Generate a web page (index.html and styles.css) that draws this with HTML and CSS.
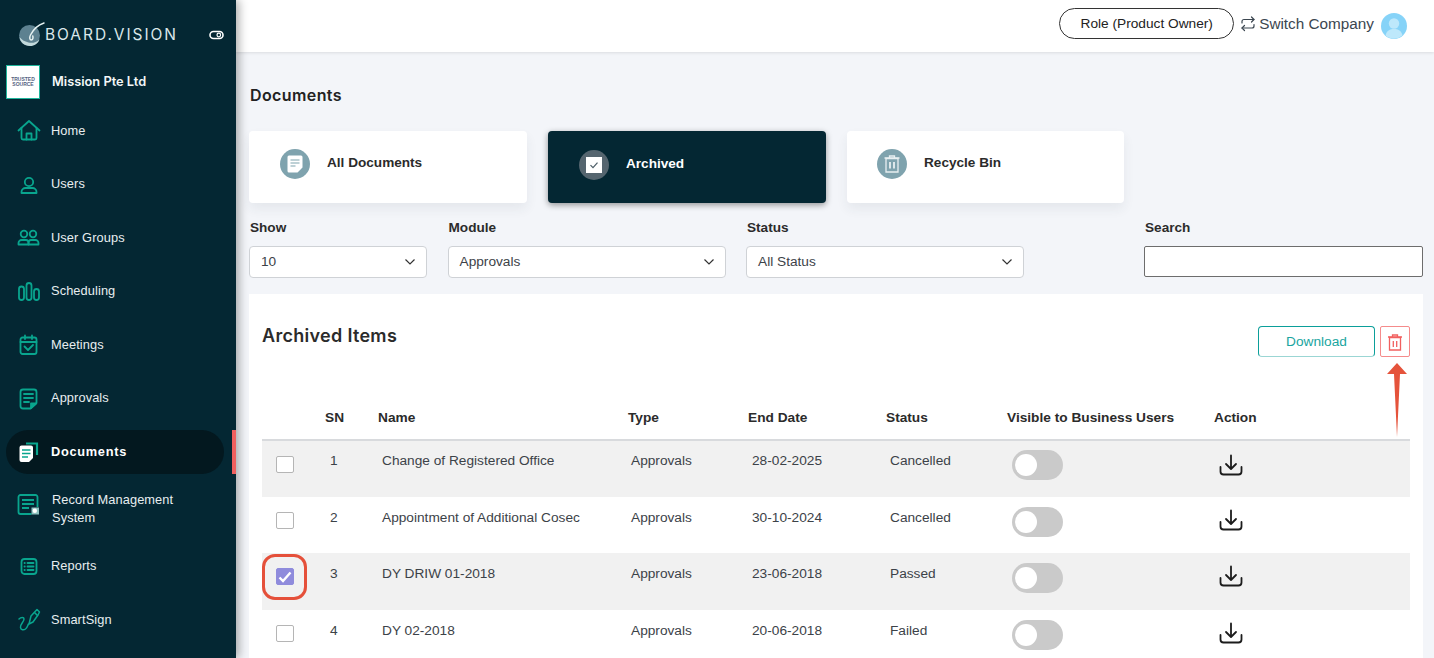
FILE: index.html
```html
<!DOCTYPE html>
<html lang="en">
<head>
<meta charset="utf-8">
<title>Documents - Board.Vision</title>
<link rel="stylesheet" href="styles.css">
</head>
<body>
<div class="app">
<aside class="sidebar">
  <div class="brand">
    <svg class="brand-mark" width="28" height="28" viewBox="0 0 28 28" fill="none">
      <circle cx="12.500" cy="14.500" r="10.500" fill="#5d8190"/>
      <path d="M2.500 16c.5 5 5 9 10.500 9 4.500 0 8-2.500 9.500-6.500-3 2.800-7 4-11 3-4-1-7-2.800-9-5.500z" fill="#c3dadc"/>
      <path d="M27 2C21 4 16 9 13.500 14c-1.200 2.500-1 5 .8 5 1.500 0 2-2 1.500-4" stroke="#e6f2f2" stroke-width="1.500" stroke-linecap="round"/>
    </svg>
    <span class="brand-name">BOARD.VISION</span>
    <svg class="brand-toggle" width="15" height="10" viewBox="0 0 15 10" fill="none">
      <rect x="1" y="1.500" width="13" height="7" rx="3.500" stroke="#fff" stroke-width="1.600"/>
      <circle cx="9.800" cy="5" r="1.800" stroke="#fff" stroke-width="1.200"/>
    </svg>
  </div>
  <div class="company">
    <div class="company-logo"><span>TRUSTED<br>SOURCE</span></div>
    <span class="company-name">Mission Pte Ltd</span>
  </div>
  <nav class="nav">
    <a class="nav-item">
      <svg class="nav-icon" viewBox="0 0 24 24" fill="none" stroke="#09a58e" stroke-width="1.800" stroke-linejoin="round" stroke-linecap="round"><path d="M1.500 12.500 12 3l10.500 9.500"/><path d="M4.500 10v10a1.500 1.500 0 0 0 1.500 1.500h12a1.500 1.500 0 0 0 1.500-1.500V10"/><path d="M9.500 21.500V15.500h5v6"/></svg>
      <span>Home</span>
    </a>
    <a class="nav-item">
      <svg class="nav-icon" viewBox="0 0 24 24" fill="none" stroke="#09a58e" stroke-width="1.800" stroke-linejoin="round"><circle cx="12" cy="10" r="4.200"/><path d="M4.500 21v-1c0-2.500 2-4 4-4h7c2 0 4 1.500 4 4v1z"/></svg>
      <span>Users</span>
    </a>
    <a class="nav-item">
      <svg class="nav-icon" viewBox="0 0 24 24" fill="none" stroke="#09a58e" stroke-width="1.800" stroke-linejoin="round"><circle cx="7" cy="9" r="3.300"/><circle cx="16" cy="9" r="3.300"/><path d="M1.500 19.500V18c0-1.500 1.500-3 3-3h4.500c1.500 0 2.500 1.500 2.500 3v1.500z"/><path d="M11.500 19.500V18c0-1.500 1-3 2.500-3h4.500c1.500 0 3 1.500 3 3v1.500z"/></svg>
      <span>User Groups</span>
    </a>
    <a class="nav-item">
      <svg class="nav-icon" viewBox="0 0 24 24" fill="none" stroke="#09a58e" stroke-width="1.800"><rect x="2" y="7.500" width="5" height="13.500" rx="2.500"/><rect x="9.500" y="4" width="5" height="17" rx="2.500"/><rect x="17" y="10" width="5" height="11" rx="2.500"/></svg>
      <span>Scheduling</span>
    </a>
    <a class="nav-item">
      <svg class="nav-icon" viewBox="0 0 24 24" fill="none" stroke="#09a58e" stroke-width="1.800" stroke-linecap="round" stroke-linejoin="round"><rect x="3.500" y="5.500" width="16" height="16.500" rx="2"/><path d="M3.500 10h16M8 3.500V7M15 3.500V7"/><path d="m7.500 14.500 3.500 3.500 5-5"/></svg>
      <span>Meetings</span>
    </a>
    <a class="nav-item">
      <svg class="nav-icon" viewBox="0 0 24 24" fill="none" stroke="#09a58e" stroke-width="1.800" stroke-linejoin="round" stroke-linecap="round"><path d="M13.500 22.500H6a2.500 2.500 0 0 1-2.500-2.500V6A2.500 2.500 0 0 1 6 3.500h11A2.500 2.500 0 0 1 19.500 6v11z"/><path d="M7 8h9M7 12h9M7 16h5"/><path d="M19 17.500h-5v4.500z" fill="#09a58e"/></svg>
      <span>Approvals</span>
    </a>
    <a class="nav-item nav-active">
      <svg class="nav-icon" viewBox="0 0 24 24" fill="none"><path d="M9 3.500h11V15" stroke="#09a58e" stroke-width="2.200"/><path d="M4.500 5.500H14a2 2 0 0 1 2 2v10.500l-4 4H4.500a2 2 0 0 1-2-2v-12.500a2 2 0 0 1 2-2z" fill="#fff"/><path d="M5 10h8.500M5 13.500h8.500M5 17h6" stroke="#09a58e" stroke-width="1.600"/></svg>
      <span>Documents</span>
    </a>
    <a class="nav-item nav-tall">
      <svg class="nav-icon nav-icon-up" viewBox="0 0 24 24" fill="none" stroke="#09a58e" stroke-width="1.800"><path d="M20.500 15V5a2 2 0 0 0-2-2H3.500a2 2 0 0 0-2 2v15a2 2 0 0 0 2 2h11"/><path d="M5 8h12M5 12h12M5 16h7"/><rect x="14.500" y="15.500" width="7.500" height="7" fill="#8cc2c0" stroke="none"/><circle cx="17.800" cy="18.800" r="2.200" fill="#fff" stroke="none"/></svg>
      <span class="nav-two">Record Management System</span>
    </a>
    <a class="nav-item">
      <svg class="nav-icon" viewBox="0 0 24 24" fill="none" stroke="#09a58e" stroke-width="1.800" stroke-linecap="round"><rect x="4.500" y="5" width="15" height="15" rx="3"/><path d="M10.500 9h6M10.500 12.500h6M10.500 16h6M7.500 9h.3M7.500 12.500h.3M7.500 16h.3"/></svg>
      <span>Reports</span>
    </a>
    <a class="nav-item">
      <svg class="nav-icon" viewBox="0 0 24 24" fill="none" stroke="#09a58e" stroke-width="1.500" stroke-linecap="round" stroke-linejoin="round"><path d="M14 9 20 2.500l2.500 2.500-1.500 3-5 7-4 2z"/><path d="m17.500 5.500 3 3"/><path d="M2 12c2-2 5-2 5 0 0 3-4 5-3.500 8.500.3 2.500 3 3 5 1.500s2-3.500 3-5"/></svg>
      <span>SmartSign</span>
    </a>
  </nav>
</aside>
<main class="main">
  <header class="topbar">
    <button class="role-pill">Role (Product Owner)</button>
    <svg class="switch-icon" width="16" height="16" viewBox="0 0 16 16" fill="none" stroke="#3b4650" stroke-width="1.200" stroke-linecap="round" stroke-linejoin="round"><path d="M2 7V5.500C2 4.400 2.800 3.500 4 3.500h10"/><path d="m11.500 1 2.500 2.500L11.500 6"/><path d="M14 8.500V10c0 1.100-.8 2-2 2H2"/><path d="M4.500 9.500 2 12l2.500 2.500"/></svg>
    <span class="switch-text">Switch Company</span>
    <svg class="avatar" width="26" height="26" viewBox="0 0 26 26"><circle cx="13" cy="13" r="13" fill="#86d3f8"/><circle cx="13" cy="10.500" r="5.200" fill="#bde8fb"/><path d="M4.500 22.500c1-5 4.500-6.500 8.500-6.500s7.500 1.500 8.500 6.500a13 13 0 0 1-17 0z" fill="#bde8fb"/></svg>
  </header>
  <div class="content">
    <h1 class="page-title">Documents</h1>
    <div class="cards">
      <div class="card">
        <span class="card-icon">
          <svg width="16" height="18" viewBox="0 0 16 18"><path d="M2 .500h12a1.500 1.500 0 0 1 1.500 1.500v10.500L10.500 17.500H2A1.500 1.500 0 0 1 .5 16V2A1.500 1.500 0 0 1 2 .500z" fill="#fff"/><path d="M3.500 5h9M3.500 8h9M3.500 11h5" stroke="#7fa3ae" stroke-width="1.200"/></svg>
        </span>
        <span class="card-label">All Documents</span>
      </div>
      <div class="card card-active">
        <span class="card-icon card-icon-dark">
          <svg width="16" height="16" viewBox="0 0 16 16"><rect width="16" height="16" fill="#fff"/><path d="m4.500 8.200 2.500 2.500 4.500-5" fill="none" stroke="#4b5c66" stroke-width="1.200"/></svg>
        </span>
        <span class="card-label">Archived</span>
      </div>
      <div class="card card-last">
        <span class="card-icon">
          <svg width="16" height="18" viewBox="0 0 16 18" fill="none" stroke="#e8eff1" stroke-width="1.300"><path d="M.5 3h15M5.500 3V1h5v2"/><path d="M2 3.500h12V17H2z"/><path d="M6 7v6.500M10 7v6.500" stroke-width="1.800"/></svg>
        </span>
        <span class="card-label">Recycle Bin</span>
      </div>
    </div>
    <div class="filters">
      <div class="field field-show">
        <label class="field-label">Show</label>
        <div class="select"><span>10</span><svg width="12" height="8" viewBox="0 0 12 8" fill="none" stroke="#333" stroke-width="1.200"><path d="m1.500 1.500 4.500 4.500 4.500-4.500"/></svg></div>
      </div>
      <div class="field field-wide">
        <label class="field-label">Module</label>
        <div class="select"><span>Approvals</span><svg width="12" height="8" viewBox="0 0 12 8" fill="none" stroke="#333" stroke-width="1.200"><path d="m1.500 1.500 4.500 4.500 4.500-4.500"/></svg></div>
      </div>
      <div class="field field-wide">
        <label class="field-label">Status</label>
        <div class="select"><span>All Status</span><svg width="12" height="8" viewBox="0 0 12 8" fill="none" stroke="#333" stroke-width="1.200"><path d="m1.500 1.500 4.500 4.500 4.500-4.500"/></svg></div>
      </div>
      <div class="field field-search">
        <label class="field-label">Search</label>
        <input class="search-input" type="text">
      </div>
    </div>
    <section class="panel">
      <div class="panel-head">
        <h2 class="panel-title">Archived Items</h2>
        <div class="panel-actions">
          <button class="btn-download">Download</button>
          <button class="btn-trash">
            <svg width="14" height="17" viewBox="0 0 14 17" fill="none" stroke="#f1605f" stroke-width="1.300"><path d="M0 3h14M4.500 3V1h5v2"/><path d="M1.500 3.500h11V16h-11z"/><path d="M5.300 7v6M8.700 7v6"/></svg>
          </button>
        </div>
      </div>
      <svg class="red-arrow" width="22" height="74" viewBox="0 0 22 74"><path d="M11 0 21 11h-7L11 74 8 11H1z" fill="#e5533b"/></svg>
      <table class="table">
        <colgroup>
          <col class="c-check"><col class="c-sn"><col class="c-name"><col class="c-type"><col class="c-date"><col class="c-status"><col class="c-vis"><col class="c-act">
        </colgroup>
        <thead>
          <tr><th></th><th>SN</th><th>Name</th><th>Type</th><th>End Date</th><th>Status</th><th>Visible to Business Users</th><th>Action</th></tr>
        </thead>
        <tbody>
          <tr>
            <td class="td-check"><span class="check"></span></td><td>1</td><td>Change of Registered Office</td><td>Approvals</td><td>28-02-2025</td><td>Cancelled</td>
            <td class="td-toggle"><span class="toggle"><span class="knob"></span></span></td>
            <td class="td-act"><svg width="24" height="22" viewBox="0 0 24 22" fill="none" stroke="#1c1c1c" stroke-width="1.800" stroke-linecap="round" stroke-linejoin="round"><path d="M12 1.500v13M7 10l5 5 5-5"/><path d="M1.500 13v4.500a3 3 0 0 0 3 3h15a3 3 0 0 0 3-3V13"/></svg></td>
          </tr>
          <tr>
            <td class="td-check"><span class="check"></span></td><td>2</td><td>Appointment of Additional Cosec</td><td>Approvals</td><td>30-10-2024</td><td>Cancelled</td>
            <td class="td-toggle"><span class="toggle"><span class="knob"></span></span></td>
            <td class="td-act"><svg width="24" height="22" viewBox="0 0 24 22" fill="none" stroke="#1c1c1c" stroke-width="1.800" stroke-linecap="round" stroke-linejoin="round"><path d="M12 1.500v13M7 10l5 5 5-5"/><path d="M1.500 13v4.500a3 3 0 0 0 3 3h15a3 3 0 0 0 3-3V13"/></svg></td>
          </tr>
          <tr>
            <td class="td-check"><span class="check check-on"><svg width="14" height="12" viewBox="0 0 14 12" fill="none" stroke="#fff" stroke-width="2.400"><path d="m1.500 6.500 3.500 3.500 7.500-8.500"/></svg><span class="ring"></span></span></td><td>3</td><td>DY DRIW 01-2018</td><td>Approvals</td><td>23-06-2018</td><td>Passed</td>
            <td class="td-toggle"><span class="toggle"><span class="knob"></span></span></td>
            <td class="td-act"><svg width="24" height="22" viewBox="0 0 24 22" fill="none" stroke="#1c1c1c" stroke-width="1.800" stroke-linecap="round" stroke-linejoin="round"><path d="M12 1.500v13M7 10l5 5 5-5"/><path d="M1.500 13v4.500a3 3 0 0 0 3 3h15a3 3 0 0 0 3-3V13"/></svg></td>
          </tr>
          <tr>
            <td class="td-check"><span class="check"></span></td><td>4</td><td>DY 02-2018</td><td>Approvals</td><td>20-06-2018</td><td>Failed</td>
            <td class="td-toggle"><span class="toggle"><span class="knob"></span></span></td>
            <td class="td-act"><svg width="24" height="22" viewBox="0 0 24 22" fill="none" stroke="#1c1c1c" stroke-width="1.800" stroke-linecap="round" stroke-linejoin="round"><path d="M12 1.500v13M7 10l5 5 5-5"/><path d="M1.500 13v4.500a3 3 0 0 0 3 3h15a3 3 0 0 0 3-3V13"/></svg></td>
          </tr>
        </tbody>
      </table>
    </section>
  </div>
</main>
</div>
</body>
</html>
```
FILE: styles.css
```css
* { box-sizing: border-box; }
html, body { margin: 0; height: 100%; overflow: hidden; }
body { font-family: "Liberation Sans", Arial, sans-serif; color: #2b2b2b; background: #f3f5f9; }
.app { display: flex; height: 658px; overflow: hidden; }

/* Sidebar */
.sidebar { position: relative; z-index: 2; flex: 0 0 236px; background: #042733; box-shadow: 3px 0 9px rgba(0,0,0,.32); color: #fff; }
.brand { display: flex; align-items: center; height: 64px; padding: 5px 12px 0 17px; }
.brand-mark { flex: none; }
.brand-name { font-family: Inter, "Liberation Sans", sans-serif; font-size: 15.5px; font-weight: 400; letter-spacing: 1.95px; color: #dbe7ea; white-space: nowrap; }
.brand-toggle { margin-left: auto; }
.company { display: flex; align-items: center; height: 36px; padding-left: 6px; }
.company-logo { width: 34px; height: 34px; background: #fff; border: 1px solid #1fb59c; display: flex; align-items: center; justify-content: center; }
.company-logo span { font-size: 5px; font-weight: 700; line-height: 5.500px; color: #56627f; text-align: center; }
.company-name { font-family: Inter, "Liberation Sans", sans-serif; font-size: 12.8px; font-weight: 600; margin: 0 0 2px 12px; color: #f3f7f8; }
.nav { display: flex; flex-direction: column; gap: 9.6px; padding-top: 8px; }
.nav-item { position: relative; display: flex; align-items: center; height: 44px; margin-left: 6px; margin-right: 12px; padding-left: 11px; border-radius: 22px; font-size: 12.8px; letter-spacing: .1px; color: #e8eef0; }
.nav-icon { flex: none; width: 24px; height: 24px; margin-right: 10px; }
.nav-icon-up { align-self: flex-start; margin-top: 9px; }
.nav-active { background: #03181f; font-weight: 700; color: #fff; letter-spacing: .7px; }
.nav-active::after { content: ""; position: absolute; right: -12px; top: 0; width: 4px; height: 44px; background: #f0605f; }
.nav-tall { height: 51px; }
.nav-two { display: block; width: 135px; line-height: 17.500px; margin-left: 1px; }

/* Main */
.main { flex: 1; min-width: 0; display: flex; flex-direction: column; }
.topbar { flex: none; height: 52px; background: #fff; display: flex; align-items: center; justify-content: flex-end; padding: 0 27px 5px 0; box-shadow: 0 1px 3px rgba(0,0,0,.1); }
.role-pill { width: 175px; height: 31px; border: 1px solid #333; border-radius: 16px; background: #fff; font: 13.7px "Liberation Sans", Arial, sans-serif; color: #222; margin-right: 6px; padding: 0; }
.switch-icon { margin-right: 3px; }
.switch-text { font-size: 15.3px; color: #3b4650; margin: 1px 7px 0 0; }
.avatar { margin-top: 4px; }
.content { flex: 1; padding: 0 11px 0 13px; min-height: 0; }
.page-title { font-family: Inter, "Liberation Sans", sans-serif; font-size: 16px; font-weight: 600; letter-spacing: .4px; line-height: 20px; margin: 33px 0 26px 1px; color: #222; }

.cards { display: flex; gap: 21px; }
.card { width: 278px; height: 72px; background: #fff; border-radius: 4px; box-shadow: 0 6px 12px rgba(40,50,70,.07); display: flex; align-items: center; padding: 0 0 7px 31px; }
.card-last { width: 277px; padding-left: 30px; }
.card-active { background: #042733; color: #fff; box-shadow: 0 2px 6px rgba(0,0,0,.4); padding-bottom: 4px; }
.card-icon { width: 30px; height: 30px; border-radius: 50%; background: #7fa3ae; display: flex; align-items: center; justify-content: center; margin-right: 17px; flex: none; }
.card-icon-dark { background: #55656f; }
.card-label { font-size: 13.6px; font-weight: 700; color: #2b2b2b; margin-bottom: 2px; }
.card-active .card-label { color: #fff; margin-bottom: 3px; }

.filters { display: flex; gap: 20.500px; margin-top: 17px; }
.field { display: flex; flex-direction: column; }
.field-show { width: 178px; }
.field-wide { width: 278px; }
.field-search { width: 279px; margin-left: auto; }
.field-label { font-size: 13.6px; font-weight: 700; line-height: 16px; margin-bottom: 10px; color: #2b2b2b; padding-left: 1px; }
.select { height: 32px; background: #fff; border: 1px solid #cfd2d6; border-radius: 4px; display: flex; align-items: center; justify-content: space-between; padding: 0 10px 1px 11px; font-size: 13.7px; color: #3c4248; }
.search-input { height: 31px; width: 100%; border: 1px solid #6d6d6d; border-radius: 2px; background: #fff; padding: 0 8px; }

.panel { position: relative; margin-top: 16px; background: #fff; padding: 0 13px; height: 400px; }
.panel-head { display: flex; justify-content: space-between; align-items: flex-start; height: 105px; padding-top: 32px; }
.panel-title { font-family: Inter, "Liberation Sans", sans-serif; font-size: 18px; font-weight: 600; letter-spacing: .3px; line-height: 20px; margin: 0; color: #2b2b2b; }
.panel-actions { display: flex; gap: 5px; }
.btn-download { width: 117px; height: 31px; background: #fff; border: 1px solid #0b9f9a; border-bottom-color: #9bd6d4; border-radius: 4px; color: #1aa5a0; font: 13.7px "Liberation Sans", Arial, sans-serif; padding: 0; }
.btn-trash { width: 30px; height: 31px; background: #fff; border: 1px solid #f58b8b; border-radius: 2px; padding: 2px 0 0; display: flex; align-items: center; justify-content: center; }
.red-arrow { position: absolute; left: 1137px; top: 69px; }

.table { width: 1148px; border-collapse: collapse; table-layout: fixed; font-size: 13.7px; }
.c-check { width: 63px; } .c-sn { width: 53px; } .c-name { width: 250px; } .c-type { width: 120px; }
.c-date { width: 138px; } .c-status { width: 121px; } .c-vis { width: 207px; } .c-act { width: 196px; }
.table th { text-align: left; font-weight: 700; height: 41px; padding: 1px 0 4px; border-bottom: 2px solid #d8dadd; color: #2b2b2b; }
.table td { height: 56.300px; vertical-align: top; padding: 13px 0 0 4px; color: #3c4248; line-height: 16px; }
.table tbody tr:first-child td { height: 57px; padding-top: 12px; }
.table tbody tr:nth-child(odd) { background: #f1f1f1; }
.table td:nth-child(2) { padding-left: 5px; }
.table td:nth-child(4) { padding-left: 3px; }
.table .td-check { padding: 15px 0 0 14px; }
.table tbody tr:first-child .td-check { padding-top: 15px; }
.table .td-toggle { padding: 10px 0 0 5px; }
.table tbody tr:first-child .td-toggle { padding-top: 9px; }
.table .td-act { padding: 12px 0 0 5px; }
.table tbody tr:first-child .td-act { padding-top: 13px; }
.check { position: relative; display: flex; align-items: center; justify-content: center; width: 18px; height: 17px; border: 1.500px solid #b5b5b5; border-radius: 2px; background: #fff; }
.check-on { background: #8f8bdc; border-color: #8f8bdc; }
.ring { position: absolute; left: -15px; top: -15px; width: 45px; height: 45.500px; border: 3.500px solid #e5503a; border-radius: 13px; }
.toggle { display: flex; align-items: center; width: 51px; height: 30px; border-radius: 15px; background: #cacaca; padding-left: 3px; }
.knob { width: 22px; height: 22px; border-radius: 50%; background: #fff; }
```
